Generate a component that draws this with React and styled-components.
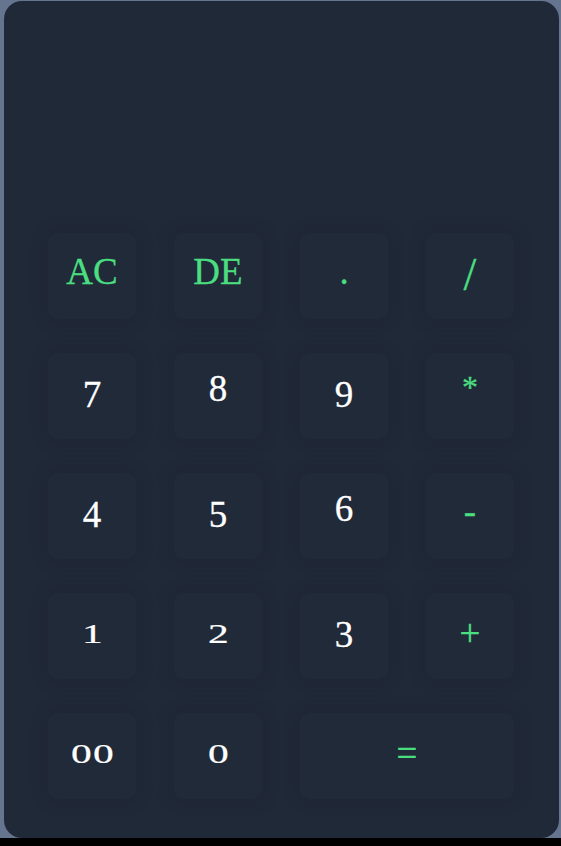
import React from "react";
import styled, { createGlobalStyle } from "styled-components";

const GlobalStyle = createGlobalStyle`
  html, body {
    margin: 0;
    padding: 0;
    background: #000;
  }
  * { box-sizing: border-box; }
`;

const Page = styled.div`
  height: 838px;
  padding: 1px 2px 0 4px;
  background: #66758f;
  display: flex;
`;

const Calculator = styled.div`
  flex: 1;
  display: flex;
  flex-direction: column;
  background: #202938;
  border-radius: 18px;
  padding: 0 40px 38px 44px;
`;

const Display = styled.div`
  height: 232px;
`;

const Keys = styled.div`
  display: grid;
  grid-template-columns: repeat(4, 88px);
  grid-auto-rows: 86px;
  column-gap: 38px;
  row-gap: 34px;
`;

const Key = styled.button`
  grid-column: span ${(p) => p.$span || 1};
  border: none;
  border-radius: 10px;
  background: #212a39;
  box-shadow: 0 0 14px 4px rgba(26, 32, 42, 0.22);
  color: ${(p) => (p.$accent ? "#4ade80" : "#ffffff")};
  font-family: "Liberation Serif", "DejaVu Serif", serif;
  font-size: 37px;
  line-height: 1;
  -webkit-text-stroke: 0.3px currentColor;
  display: flex;
  align-items: center;
  justify-content: center;
  padding: 0 0 10px;
  cursor: pointer;
`;

// old-style figure look: small digits sit at x-height, some hang below
const Fig = styled.span`
  display: inline-block;
  transform-origin: 50% 85%;
  transform: ${(p) =>
    p.$form === "x"
      ? "translateY(-1px) scale(1.12, 0.76)"
      : p.$form === "desc"
      ? "translateY(3px)"
      : "translateY(-3px)"};
  margin: 0 ${(p) => (p.$form === "x" ? "2px" : "0")};
`;

const Op = styled.span`
  font-size: ${(p) => p.$size || "37px"};
  transform: translateY(${(p) => p.$shift || "0px"});
  display: inline-block;
`;

const forms = { "0": "x", "1": "x", "2": "x", "6": "asc", "8": "asc" };

const Digits = ({ value }) => (
  <>
    {value.split("").map((d, i) => (
      <Fig key={i} $form={forms[d] || "desc"}>
        {d}
      </Fig>
    ))}
  </>
);

export default function App() {
  return (
    <>
      <GlobalStyle />
      <Page>
        <Calculator>
          <Display />
          <Keys>
            <Key $accent>AC</Key>
            <Key $accent>DE</Key>
            <Key $accent><Op>.</Op></Key>
            <Key $accent><Op $size="46px" $shift="4px">/</Op></Key>

            <Key><Digits value="7" /></Key>
            <Key><Digits value="8" /></Key>
            <Key><Digits value="9" /></Key>
            <Key $accent><Op $size="32px" $shift="-4px">*</Op></Key>

            <Key><Digits value="4" /></Key>
            <Key><Digits value="5" /></Key>
            <Key><Digits value="6" /></Key>
            <Key $accent><Op>-</Op></Key>

            <Key><Digits value="1" /></Key>
            <Key><Digits value="2" /></Key>
            <Key><Digits value="3" /></Key>
            <Key $accent><Op $shift="2px">+</Op></Key>

            <Key><Digits value="00" /></Key>
            <Key><Digits value="0" /></Key>
            <Key $accent $span={2}><Op $shift="2px">=</Op></Key>
          </Keys>
        </Calculator>
      </Page>
    </>
  );
}
